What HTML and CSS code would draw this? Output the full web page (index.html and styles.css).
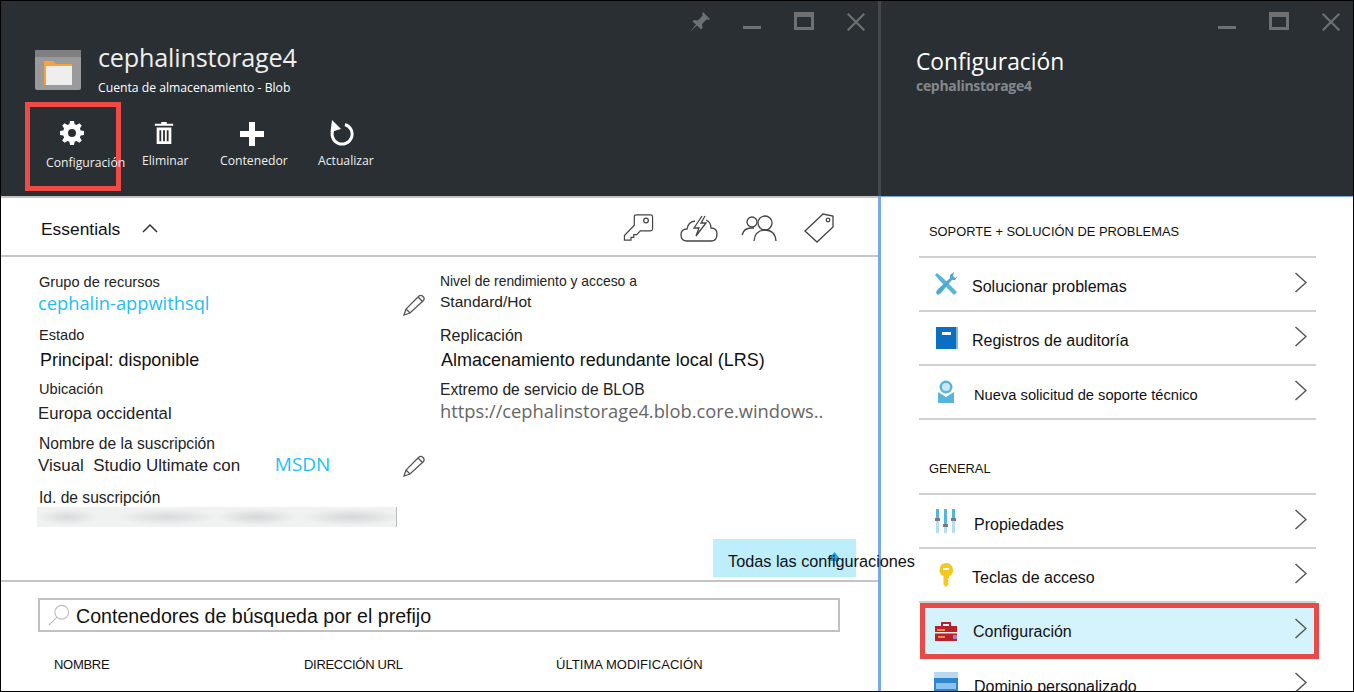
FILE: index.html
```html
<!DOCTYPE html>
<html lang="es">
<head>
    <meta charset="UTF-8">
    <title>cephalinstorage4 - Configuración</title>
    <link rel="stylesheet" href="styles.css">
</head>
<body>
<div class="page">
    <section class="blade blade-left">
        <header class="blade-head">
            <div class="win-controls">
                <svg class="win-btn" viewBox="0 0 20 20"><path d="M13 0L20 7 18 8 17 7 12 12 12.500 16 11 17.500 7 13.500 0 20 6 12.500 2.500 9.500 4 8 8 8.500 13 3 12 2z"/></svg>
                <svg class="win-btn" viewBox="0 0 20 20"><rect x="1" y="14" width="18" height="3"/></svg>
                <svg class="win-btn" viewBox="0 0 20 20"><path fill-rule="evenodd" d="M0 0h20v18H0zM3 5v10h14V5z"/></svg>
                <svg class="win-btn" viewBox="0 0 20 20"><path d="M1 2.500L2.500 1 10 8.500 17.500 1 19 2.500 11.500 10l7.500 7.500-1.500 1.500L10 11.500 2.500 19 1 17.500 8.500 10z"/></svg>
            </div>
            <div class="resource">
                <svg class="resource-icon" viewBox="0 0 46 40">
                    <rect width="46" height="40" rx="2" fill="#9a9a9a"/>
                    <rect width="46" height="7" fill="#7f7f7f"/>
                    <path d="M9 11h9l3 3h16v21H9z" fill="#f7a33a"/>
                    <rect x="11" y="16" width="26" height="19" fill="#eeeeee"/>
                </svg>
                <div>
                    <div class="resource-name">cephalinstorage4</div>
                    <div class="resource-type">Cuenta de almacenamiento - Blob</div>
                </div>
            </div>
            <div class="toolbar">
                <div class="tool tool-selected">
                    <svg class="tool-icon gear" viewBox="0 0 24 24"><path fill-rule="evenodd" d="M10 0h4l.6 3.300 2 .8L19.400 2.200l2.400 2.400-1.900 2.800.8 2 3.300.6v4l-3.300.6-.8 2 1.900 2.800-2.400 2.400-2.800-1.900-2 .8L14 24h-4l-.6-3.300-2-.8-2.800 1.900-2.400-2.400 1.900-2.800-.8-2L0 14v-4l3.300-.6.8-2L2.200 4.600l2.400-2.400 2.800 1.900 2-.8zM12 8a4 4 0 1 0 0 8 4 4 0 0 0 0-8z"/></svg>
                    <span class="tool-label">Configuración</span>
                </div>
                <div class="tool tool-delete">
                    <svg class="tool-icon" viewBox="0 0 20 24"><path fill-rule="evenodd" d="M7 0h6v2h7v2H0V2h7zM2 6h16v18H2zM5 9v12h2V9zM9 9v12h2V9zM13 9v12h2V9z"/></svg>
                    <span class="tool-label">Eliminar</span>
                </div>
                <div class="tool tool-add">
                    <svg class="tool-icon" viewBox="0 0 24 24"><path d="M9 0h6v9h9v6h-9v9H9v-9H0V9h9z"/></svg>
                    <span class="tool-label">Contenedor</span>
                </div>
                <div class="tool tool-refresh">
                    <svg class="tool-icon refresh" viewBox="0 0 24 26">
                        <path class="refresh-ring" d="M15 4.500A10 10 0 1 1 3.500 9"/>
                        <path d="M2 0L11 9 0.500 12z"/>
                    </svg>
                    <span class="tool-label">Actualizar</span>
                </div>
            </div>
        </header>

        <div class="essentials-bar">
            <span class="essentials-title">Essentials</span>
            <svg class="essentials-toggle" viewBox="0 0 16 10"><path d="M1 9l7-7 7 7"/></svg>
            <div class="essentials-icons">
                <svg class="line-icon icon-key" viewBox="0 0 32 32"><path d="M14 2h15q2 0 2 2v13q0 2-2 2H18l-4 4h-3v3H8v3H1v-5L11.500 13V4q0-2 2.500-2z"/><circle cx="24" cy="8" r="2.500"/></svg>
                <svg class="line-icon icon-cloud" viewBox="0 0 38 30"><path d="M12 28H7q-6 0-6-6 0-6 6-6 1-7 8-8M26 7q5 2 5 8 6 0 6 6 0 7-6 7H12"/><path d="M22 3L14 15h5l-3 8 10-13h-5l4-7"/></svg>
                <svg class="line-icon icon-users" viewBox="0 0 36 28"><circle cx="11" cy="8" r="5"/><circle cx="24" cy="9" r="7"/><path d="M1 21q2-7 9-7h3M13 27q1-11 11-11t11 11"/></svg>
                <svg class="line-icon icon-tag" viewBox="0 0 30 30"><path d="M1 18L19 1l10 2v11L13 29z"/><circle cx="24" cy="7" r="1.800"/></svg>
            </div>
        </div>

        <div class="details">
            <div class="details-grid">
                <div class="col col-a">
                    <div class="field">
                        <div class="label">Grupo de recursos</div>
                        <div class="value-row">
                            <a class="value value-link value-big">cephalin-appwithsql</a>
                            <svg class="pencil" viewBox="0 0 22 22"><path d="M1 21l2-6L16 2q2-1.500 4 .5t.5 4L7 19zM3 15l4 4M15 3l4 4"/></svg>
                        </div>
                    </div>
                    <div class="field field-gap field-wide">
                        <div class="label">Estado</div>
                        <div class="value value-strong">Principal: disponible</div>
                    </div>
                    <div class="field field-gap field-tall">
                        <div class="label">Ubicación</div>
                        <div class="value">Europa occidental</div>
                    </div>
                    <div class="field field-sub">
                        <div class="label label-large">Nombre de la suscripción</div>
                        <div class="value-row">
                            <span class="value value-sub">Visual&nbsp; Studio Ultimate con <a class="value-link msdn">MSDN</a></span>
                            <svg class="pencil" viewBox="0 0 22 22"><path d="M1 21l2-6L16 2q2-1.500 4 .5t.5 4L7 19zM3 15l4 4M15 3l4 4"/></svg>
                        </div>
                    </div>
                    <div class="field-last">
                        <div class="label label-large">Id. de suscripción</div>
                        <div class="blurred-id"></div>
                    </div>
                </div>
                <div class="col col-b">
                    <div class="field field-tall">
                        <div class="label label-small">Nivel de rendimiento y acceso a</div>
                        <div class="value value-plain">Standard/Hot</div>
                    </div>
                    <div class="field field-gap field-wide">
                        <div class="label label-big">Replicación</div>
                        <div class="value value-strong value-wide">Almacenamiento redundante local (LRS)</div>
                    </div>
                    <div class="field">
                        <div class="label label-large">Extremo de servicio de BLOB</div>
                        <div class="value value-url">https://cephalinstorage4.blob.core.windows..</div>
                    </div>
                </div>
            </div>
            <div class="all-settings">Todas las configuraciones</div>
        </div>

        <div class="search">
            <svg class="search-icon" viewBox="0 0 24 24"><circle cx="15" cy="9" r="7.500"/><path d="M9.500 14.500L1 23"/></svg>
            <span class="search-text">Contenedores de búsqueda por el prefijo</span>
        </div>
        <div class="table-head">
            <span class="th th-name">NOMBRE</span>
            <span class="th th-url">DIRECCIÓN URL</span>
            <span class="th th-date">ÚLTIMA MODIFICACIÓN</span>
        </div>
    </section>

    <section class="blade blade-right">
        <header class="blade-head blade-head-right">
            <div class="win-controls">
                <svg class="win-btn" viewBox="0 0 20 20"><rect x="1" y="14" width="18" height="3"/></svg>
                <svg class="win-btn" viewBox="0 0 20 20"><path fill-rule="evenodd" d="M0 0h20v18H0zM3 5v10h14V5z"/></svg>
                <svg class="win-btn" viewBox="0 0 20 20"><path d="M1 2.500L2.500 1 10 8.500 17.500 1 19 2.500 11.500 10l7.500 7.500-1.500 1.500L10 11.500 2.500 19 1 17.500 8.500 10z"/></svg>
            </div>
            <div class="right-title">Configuración</div>
            <div class="right-sub">cephalinstorage4</div>
        </header>
        <div class="settings">
            <h2 class="group-title group-first">SOPORTE + SOLUCIÓN DE PROBLEMAS</h2>
            <ul class="menu">
                <li class="menu-row">
                    <svg class="menu-icon" viewBox="0 0 24 24"><path d="M1 3l2-2 6 5 3 3 11 11-3 3L9 12 6 9z" fill="#59b4d9"/><path d="M20 0l-4 3v3L3 18l-1 3 2 2 3-2L18 8h3l3-4-3 2-2-2z" fill="#4eaad0"/></svg>
                    <span>Solucionar problemas</span>
                    <svg class="chevron" viewBox="0 0 12 21"><path d="M.5 1L11 10.500.5 20"/></svg>
                </li>
                <li class="menu-row">
                    <svg class="menu-icon" viewBox="0 0 24 24"><rect x="3" y="1" width="21" height="22" fill="#7fb7dd"/><rect x="2" y="1" width="20" height="22" fill="#0a6fc2"/><rect x="8" y="6" width="9" height="3" fill="#fff"/></svg>
                    <span>Registros de auditoría</span>
                    <svg class="chevron" viewBox="0 0 12 21"><path d="M.5 1L11 10.500.5 20"/></svg>
                </li>
                <li class="menu-row">
                    <svg class="menu-icon" viewBox="0 0 24 24"><circle cx="12" cy="7" r="6.500" fill="#59b4d9"/><circle cx="12" cy="7" r="4" fill="#c9e7f3"/><path d="M4 12l8 5 8-5v11H4z" fill="#59b4d9"/></svg>
                    <span class="text-nudge text-small">Nueva solicitud de soporte técnico</span>
                    <svg class="chevron" viewBox="0 0 12 21"><path d="M.5 1L11 10.500.5 20"/></svg>
                </li>
            </ul>
            <h2 class="group-title group-second">GENERAL</h2>
            <ul class="menu">
                <li class="menu-row">
                    <svg class="menu-icon" viewBox="0 0 24 24"><path d="M2 0h3v24H2zM10 0h3v24h-3zM18 0h3v24h-3z" fill="#b5deef"/><path d="M2 0h3v9H2zM10 0h3v15h-3zM18 0h3v9h-3z" fill="#59b4d9"/><path d="M1 9h5v3H1zM9 15h5v3H9zM17 9h5v3h-5z" fill="#7a7a7a"/></svg>
                    <span class="text-nudge text-low">Propiedades</span>
                    <svg class="chevron" viewBox="0 0 12 21"><path d="M.5 1L11 10.500.5 20"/></svg>
                </li>
                <li class="menu-row">
                    <svg class="menu-icon" viewBox="0 0 24 24"><path fill-rule="evenodd" d="M12 0a7 7 0 0 1 3 13.300V15l-1.500 1.500L15 18l-1.500 1.500L15 21l-3 3-2.500-2.500V13.300A7 7 0 0 1 12 0zM9 5v2h6V5z" fill="#f4c81f"/></svg>
                    <span>Teclas de acceso</span>
                    <svg class="chevron" viewBox="0 0 12 21"><path d="M.5 1L11 10.500.5 20"/></svg>
                </li>
                <li class="menu-row menu-row-active">
                    <svg class="menu-icon" viewBox="0 0 24 24"><path fill-rule="evenodd" d="M7 3h10v4h6v15H1V7h6zM9 5v2h6V5z" fill="#b9202b"/><rect x="1" y="13" width="22" height="1.500" fill="#e8e8e8"/><path d="M3 10h8v2H3zM4 17h7v2H4z" fill="#ee8a52"/><rect x="19" y="16" width="4" height="4" fill="#9c80c9"/></svg>
                    <span>Configuración</span>
                    <svg class="chevron" viewBox="0 0 12 21"><path d="M.5 1L11 10.500.5 20"/></svg>
                </li>
                <li class="menu-row menu-row-cut">
                    <svg class="menu-icon" viewBox="0 0 24 24"><rect width="24" height="24" fill="#2f86cc"/><rect width="24" height="6" fill="#b7d8ef"/><rect x="2" y="11" width="20" height="6" fill="#8cc3ea"/></svg>
                    <span class="text-nudge">Dominio personalizado</span>
                    <svg class="chevron" viewBox="0 0 12 21"><path d="M.5 1L11 10.500.5 20"/></svg>
                </li>
            </ul>
        </div>
    </section>
</div>
</body>
</html>
```

FILE: styles.css
```css
* {
    box-sizing: border-box;
}

html, body {
    margin: 0;
    padding: 0;
}

body {
    font-family: "Liberation Sans", Arial, sans-serif;
    color: #111;
    background: #fff;
}

.page {
    display: flex;
    width: 1354px;
    height: 692px;
    border: 1px solid #000;
    overflow: hidden;
}

.blade {
    display: flex;
    flex-direction: column;
}

.blade-left {
    width: 877px;
}

.blade-right {
    flex: 1;
    min-width: 0;
}

.blade-head {
    height: 195px;
    flex: none;
    background: #2a2f33;
    color: #fff;
    font-family: "Open Sans", sans-serif;
}

/* window buttons, top right of each blade */
.win-controls {
    display: flex;
    justify-content: flex-end;
    gap: 32px;
    height: 32px;
    padding-right: 12px;
    padding-top: 11px;
}

.win-btn {
    width: 20px;
    height: 20px;
    flex: none;
    fill: #6e7174;
}

.resource {
    display: flex;
    align-items: flex-start;
    margin-top: 8px;
    padding-left: 34px;
}

.resource-icon {
    width: 46px;
    height: 40px;
    margin-top: 9px;
    margin-right: 17px;
}

.resource-name {
    font-size: 25.200px;
    line-height: 32px;
    color: #eee;
    letter-spacing: -0.2px;
}

.resource-type {
    font-size: 12.200px;
    line-height: 16px;
    margin-top: 7px;
}

.toolbar {
    display: flex;
    margin-left: 24px;
    margin-top: 6px;
}

.tool {
    position: relative;
    height: 89px;
    font-size: 12.200px;
}

.tool-icon {
    display: block;
    position: absolute;
    top: 20px;
    width: 24px;
    height: 24px;
    fill: #fff;
}

.tool-label {
    position: absolute;
    top: 50px;
    white-space: nowrap;
    color: #eee;
}

.tool-selected {
    width: 96px;
    border: 5px solid #ee4b46;
}

.tool-selected .tool-icon {
    left: 30px;
    top: 14px;
}

.tool-selected .tool-label {
    left: 16px;
    top: 47px;
}

.tool-delete {
    width: 88px;
}

.tool-delete .tool-icon {
    left: 33px;
    width: 20px;
    height: 22px;
}

.tool-delete .tool-label {
    left: 21px;
}

.tool-add {
    width: 92px;
}

.tool-add .tool-icon {
    left: 31px;
}

.tool-add .tool-label {
    left: 11px;
}

.tool-refresh {
    width: 90px;
}

.tool-refresh .tool-icon {
    left: 29px;
    top: 18px;
    height: 26px;
}

.tool-refresh .tool-label {
    left: 17px;
}

.refresh-ring {
    fill: none;
    stroke: #fff;
    stroke-width: 3;
}

.essentials-bar {
    display: flex;
    align-items: center;
    height: 61px;
    flex: none;
    padding-left: 40px;
    border-top: 2px solid #c4c4c4;
    border-bottom: 2px solid #c4c4c4;
}

.essentials-title {
    padding-top: 6px;
    font-size: 17.400px;
}

.essentials-toggle {
    width: 16px;
    height: 10px;
    margin-left: 22px;
    margin-top: 2px;
    fill: none;
    stroke: #333;
    stroke-width: 1.5;
}

.essentials-icons {
    display: flex;
    align-items: center;
    margin-left: auto;
    margin-top: 2px;
    padding-right: 44px;
}

.line-icon {
    fill: none;
    stroke: #444;
    stroke-width: 1.3;
    height: 30px;
}

.icon-key {
    width: 31px;
}

.icon-cloud {
    width: 38px;
    margin-left: 26px;
}

.icon-users {
    width: 36px;
    margin-left: 23px;
}

.icon-tag {
    width: 30px;
    margin-left: 27px;
}

.details {
    height: 325px;
    flex: none;
    padding-top: 15px;
    border-bottom: 2px solid #c4c4c4;
}

.details-grid {
    display: flex;
    height: 255px;
}

.col-a {
    width: 424px;
    padding-left: 37px;
}

.col-a .label {
    margin-left: 1px;
}

.col-b {
    padding-left: 15px;
    margin-top: -1px;
}

.field {
    height: 53px;
}

.field-wide {
    height: 54px;
}

.field-tall {
    height: 55px;
}

.field-sub {
    height: 54px;
}

.label {
    font-size: 14.600px;
    line-height: 20px;
    color: #222;
    white-space: nowrap;
}

.label-small {
    font-size: 13.900px;
}

.label-large {
    font-size: 15.600px;
}

.label-big {
    font-size: 16px;
}

.value {
    display: block;
    font-size: 16.700px;
    line-height: 22px;
    color: #222;
    white-space: nowrap;
}

.value-plain {
    font-size: 15.500px;
}

.value-sub {
    font-size: 16.950px;
}

.field-gap .value {
    margin-top: 4px;
}

.col-a .field-gap .value-strong {
    margin-top: 5px;
}

.field-sub .value-row {
    margin-top: -1px;
}

.value-strong {
    font-size: 17.900px;
    color: #111;
    margin-left: 2px;
    line-height: 20px;
}

.value-wide {
    font-size: 17.980px;
    margin-left: 1px;
}

.value-link {
    color: #1ec0f0;
}

.value-big {
    margin-top: -2px;
    font-family: "Open Sans", sans-serif;
    font-size: 18.300px;
}

.msdn {
    font-family: "Open Sans", sans-serif;
    font-size: 19px;
    margin-left: 30px;
}

.value-url {
    font-family: "Open Sans", sans-serif;
    font-size: 18.300px;
    color: #666;
}

.value-row {
    display: flex;
    align-items: center;
    justify-content: space-between;
}

.pencil {
    width: 22px;
    height: 22px;
    fill: none;
    stroke: #555;
    stroke-width: 1.3;
    margin-top: 2px;
}

.blurred-id {
    width: 360px;
    height: 20px;
    margin-left: -1px;
    margin-top: -1px;
    border-right: 1px solid #bbb;
    background:
        radial-gradient(ellipse 30px 8px at 30px 10px, #d8dadb, transparent),
        radial-gradient(ellipse 50px 8px at 130px 10px, #d8dadb, transparent),
        radial-gradient(ellipse 40px 8px at 220px 10px, #d4d6d7, transparent),
        radial-gradient(ellipse 50px 8px at 315px 10px, #d4d6d7, transparent),
        #f0f1f1;
}

/* text runs past the button and over the next blade */
.all-settings {
    position: relative;
    z-index: 1;
    width: 143px;
    height: 38px;
    margin-left: 712px;
    margin-top: 12px;
    padding-left: 15px;
    font-size: 16.250px;
    line-height: 44px;
    white-space: nowrap;
    background: #bdeefb;
}

.all-settings::before {
    content: "";
    position: absolute;
    left: 117px;
    top: 13px;
    width: 9px;
    height: 9px;
    background: #1e9fd8;
    clip-path: polygon(0 60%, 50% 0, 100% 60%, 100% 100%, 0 100%);
    z-index: -1;
}

.search {
    display: flex;
    align-items: center;
    flex: none;
    width: 802px;
    height: 34px;
    margin-top: 16px;
    margin-left: 37px;
    padding-left: 8px;
    border: 2px solid #c0c0c0;
}

.search-icon {
    width: 22px;
    height: 22px;
    fill: none;
    stroke: #bbb;
    stroke-width: 1.2;
}

.search-text {
    margin-left: 6px;
    padding-top: 2px;
    font-size: 19.600px;
    color: #111;
}

.table-head {
    display: flex;
    padding-left: 53px;
    padding-top: 24px;
    font-size: 13px;
    line-height: 18px;
    letter-spacing: -0.3px;
}

.th-name {
    width: 250px;
}

.th-url {
    width: 252px;
}

.th-date {
    letter-spacing: 0.05px;
}

.blade-head-right {
    border-left: 3px solid #44484c;
}

.right-title {
    margin-top: 14px;
    margin-left: 35px;
    font-size: 22.800px;
    line-height: 30px;
}

.right-sub {
    margin-left: 35px;
    margin-top: -1px;
    font-size: 14px;
    line-height: 20px;
    font-weight: 700;
    color: #85888b;
    letter-spacing: -0.3px;
}

.settings {
    flex: 1;
    min-height: 0;
    padding-left: 38px;
    padding-right: 37px;
    border-top: 1px solid #7aa7e8;
    border-left: 3px solid #7aa7e8;
    overflow: hidden;
}

.group-title {
    margin: 0;
    padding-left: 10px;
    font-size: 12.900px;
    font-weight: 400;
    line-height: 18px;
}

.group-first {
    padding-top: 26px;
    height: 59px;
}

.group-second {
    padding-top: 40px;
    height: 73px;
}

.menu {
    list-style: none;
    margin: 0;
    padding: 0;
    border-top: 2px solid #d0d0d0;
}

.menu-row {
    display: flex;
    align-items: center;
    height: 54px;
    padding-left: 15px;
    padding-right: 9px;
    font-size: 16px;
    border-bottom: 2px solid #d0d0d0;
}

.menu-row span {
    margin-left: 14px;
    padding-top: 5px;
}

.menu-row .text-nudge {
    margin-left: 16px;
}

.menu-row .text-small {
    font-size: 14.700px;
}

.menu-row .text-low {
    padding-top: 7px;
}

.menu-icon {
    width: 24px;
    height: 24px;
    flex: none;
}

.chevron {
    width: 12px;
    height: 21px;
    margin-left: auto;
    margin-top: -3px;
    fill: none;
    stroke: #555;
    stroke-width: 1.5;
}

.menu-row-active {
    height: 56px;
    margin-right: -3px;
    margin-left: 1px;
    padding-left: 9px;
    padding-right: 7px;
    background: #d5f3fc;
    border: 5px solid #e84b47;
}

.menu-row-active span {
    margin-left: 15px;
    padding-top: 1px;
}

.menu-row-active .chevron {
    margin-top: -5px;
}

.menu-row-cut {
    margin-top: -2px;
    border-bottom: 0;
}
```
